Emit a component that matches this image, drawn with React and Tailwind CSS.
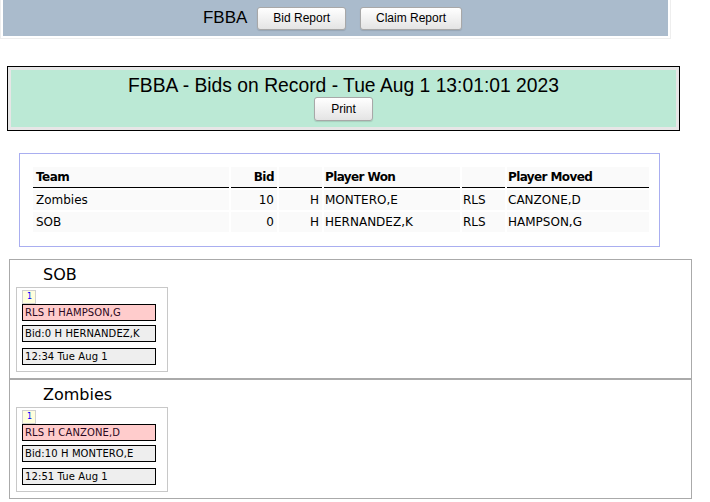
import React from 'react';

const arial = "font-['Liberation_Sans',Arial,sans-serif]";
const verdana = "font-['DejaVu_Sans',Verdana,sans-serif]";
const btn =
  "rounded-[3px] border border-[#a8a8a8] bg-linear-to-b from-white to-[#e4e4e4] px-[15px] text-[12px] leading-none text-black shadow-[0_1px_1px_rgba(0,0,0,0.12)] " +
  arial;

const bids = [
  { team: 'Zombies', bid: 10, won: 'MONTERO,E', moved: 'CANZONE,D' },
  { team: 'SOB', bid: 0, won: 'HERNANDEZ,K', moved: 'HAMPSON,G' },
];

const claims = [
  { team: 'SOB', moved: 'HAMPSON,G', bid: 0, won: 'HERNANDEZ,K', time: '12:34 Tue Aug 1' },
  { team: 'Zombies', moved: 'CANZONE,D', bid: 10, won: 'MONTERO,E', time: '12:51 Tue Aug 1' },
];

// carte de réclamation pour une équipe
const ClaimCard = ({ c }) => (
  <div className={`mt-[3px] h-[85px] w-[152px] border border-[#c8c8c8] pl-[5px] pt-[2px] ${verdana}`}>
    <div className="h-[14px] w-[14px] border border-[#d0d0d0] bg-[#ffffdd] pl-[4px] pt-[2px] text-[8px] leading-[8px] text-[#0000ff]">
      1
    </div>
    <div className="h-[17px] w-[134px] border border-black bg-[#ffcccc] pl-[2px] text-[10px] leading-[15px] tracking-[0.1px] text-[#2a0820]">
      RLS H {c.moved}
    </div>
    <div className="mt-[4px] h-[17px] w-[134px] border border-black bg-[#eeeeee] pl-[2px] text-[10px] leading-[15px] tracking-[0.1px] text-black">
      Bid:{c.bid} H {c.won}
    </div>
    <div className="mt-[6px] h-[17px] w-[134px] border border-black bg-[#eeeeee] pl-[2px] text-[10px] leading-[15px] tracking-[0.1px] text-black">
      {c.time}
    </div>
  </div>
);

export default function App() {
  return (
    <div className="min-h-[502px] w-[710px] bg-white text-black">
      {/* barre du haut */}
      <div className="w-[671px] border-x border-b border-[#eeeeee] px-[2px] pb-[2px]">
        <div className="flex h-[36px] items-center justify-center bg-[#aabbcc] pr-[6px]">
          <span className={`mr-[10px] text-[17px] ${arial}`}>FBBA</span>
          <button className={`${btn} h-[23px]`}>Bid Report</button>
          <button className={`${btn} ml-[14px] h-[23px]`}>Claim Report</button>
        </div>
      </div>

      {/* titre */}
      <div className="ml-[7px] mt-[27px] w-[673px] border border-black bg-[#e6e6e6] p-[3px]">
        <div className="flex h-[57px] flex-col items-center bg-[#bbe9d5] pt-[4px]">
          <div className={`text-[19.3px] leading-[23px] ${arial}`}>
            FBBA - Bids on Record - Tue Aug 1 13:01:01 2023
          </div>
          <button className={`${btn} h-[24px] px-[16px]`}>Print</button>
        </div>
      </div>

      {/* tableau des enchères */}
      <div className="ml-[19px] mt-[22px] w-[641px] border border-[#a9aef0] px-[11px] pb-[12px] pt-[11px]">
        <table className={`w-[620px] table-fixed border-separate border-spacing-[2px] text-[12px] ${verdana}`}>
          <colgroup>
            <col className="w-[196px]" />
            <col className="w-[46px]" />
            <col className="w-[43px]" />
            <col className="w-[136px]" />
            <col className="w-[43px]" />
            <col className="w-[142px]" />
          </colgroup>
          <thead>
            <tr className="h-[21px]">
              <th className="border-b border-black bg-[#fafafa] px-[3px] text-left font-bold tracking-[-0.5px]">Team</th>
              <th className="border-b border-black bg-[#fafafa] px-[3px] text-right font-bold tracking-[-0.5px]">Bid</th>
              <th className="border-b border-black bg-[#fafafa]"></th>
              <th className="border-b border-black bg-[#fafafa] px-[1px] text-left font-bold tracking-[-0.6px]">Player Won</th>
              <th className="border-b border-black bg-[#fafafa]"></th>
              <th className="border-b border-black bg-[#fafafa] px-[1px] text-left font-bold tracking-[-0.6px]">Player Moved</th>
            </tr>
          </thead>
          <tbody>
            {bids.map((b) => (
              <tr key={b.team} className="h-[20px]">
                <td className="bg-[#fafafa] px-[3px]">{b.team}</td>
                <td className="bg-[#fafafa] px-[3px] text-right">{b.bid}</td>
                <td className="bg-[#fafafa] px-[3px] text-right">H</td>
                <td className="bg-[#fafafa] px-[1px]">{b.won}</td>
                <td className="bg-[#fafafa] px-[1px]">RLS</td>
                <td className="bg-[#fafafa] px-[1px]">{b.moved}</td>
              </tr>
            ))}
          </tbody>
        </table>
      </div>

      {/* sections par équipe */}
      <div className="ml-[9px] mt-[12px] w-[683px]">
        {claims.map((c) => (
          <div key={c.team} className="h-[120px] border border-[#aaaaaa] px-[6px] pt-[5px]">
            <div className={`ml-[27px] text-[16px] leading-[19px] ${verdana}`}>{c.team}</div>
            <ClaimCard c={c} />
          </div>
        ))}
      </div>
    </div>
  );
}
